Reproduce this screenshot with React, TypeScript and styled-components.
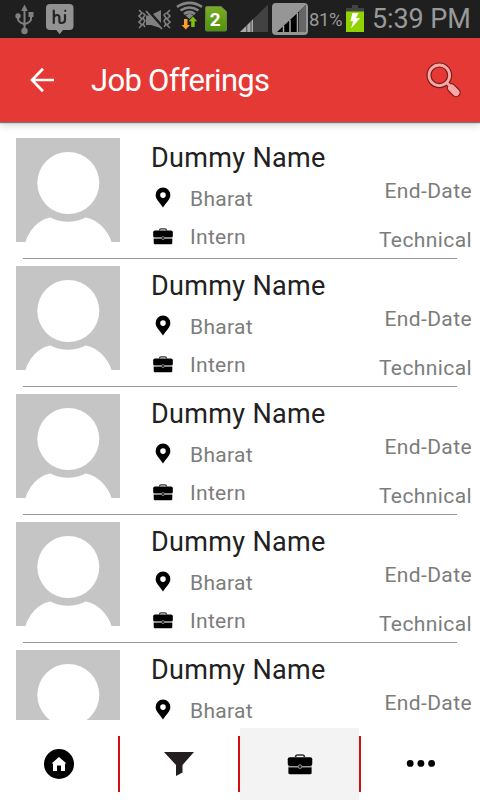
import React from "react";
import styled, { createGlobalStyle } from "styled-components";

const GlobalStyle = createGlobalStyle`
  * { box-sizing: border-box; }
  body { margin: 0; background: #fff; font-family: Roboto, "Liberation Sans", sans-serif; }
`;

const Screen = styled.div`
  width: 480px;
  height: 800px;
  display: flex;
  flex-direction: column;
  overflow: hidden;
  background: #fff;
`;

const StatusBar = styled.div`
  height: 38px;
  flex: none;
  display: flex;
  align-items: flex-start;
  background: #1f1f1f;
  color: #999;
`;

const StatusIcon = styled.svg<{ $gap: number }>`
  display: block;
  flex: none;
  margin-left: ${(p) => p.$gap}px;
`;

const BatteryLevel = styled.span`
  width: 36px;
  flex: none;
  padding-left: 1px;
  font-size: 18.5px;
  line-height: 38px;
  letter-spacing: -0.4px;
  margin-top: 1px;
  font-weight: 400;
  white-space: nowrap;
`;

const Clock = styled.span`
  margin-left: 8px;
  font-size: 27px;
  line-height: 38px;
  letter-spacing: -0.1px;
  white-space: nowrap;
`;

const Toolbar = styled.header`
  height: 84px;
  flex: none;
  display: flex;
  align-items: center;
  padding: 0 18px 0 29px;
  background: #e53935;
  color: #fff;
  position: relative;
  box-shadow: 0 1px 1px #777, 0 2px 8px rgba(0, 0, 0, 0.22);
`;

const Title = styled.h1`
  flex: 1;
  margin: 1px 0 0 36px;
  font-size: 31px;
  font-weight: 400;
  letter-spacing: -0.7px;
  white-space: nowrap;
`;

const JobList = styled.main`
  height: 598px;
  flex: none;
  overflow: hidden;
  padding-top: 8px;
`;

const JobRow = styled.article`
  height: 128px;
  display: flex;
  padding: 8px 8px 0 16px;
`;

const Divider = styled.div`
  height: 1px;
  margin: 0 23px -1px;
  background: #999;
`;

const Avatar = styled.svg`
  display: block;
  flex: none;
  background: #c5c5c5;
`;

const Details = styled.div`
  flex: 1;
  padding-left: 31px;
`;

const Name = styled.div`
  height: 42px;
  font-size: 27px;
  line-height: 41px;
  letter-spacing: 0.33px;
  color: #212121;
  white-space: nowrap;
`;

const Fact = styled.div`
  height: 38px;
  display: flex;
  align-items: center;
  font-size: 21px;
  font-weight: 400;
  letter-spacing: 0.3px;
  color: #7c7c7c;
  white-space: nowrap;
`;

const FactIcon = styled.svg`
  display: block;
  width: 24px;
  height: 24px;
  margin: 0 15px 2px 0;
`;

const Meta = styled.div`
  width: 100px;
  display: flex;
  flex-direction: column;
  align-items: flex-end;
  padding-top: 29px;
  font-size: 21px;
  font-weight: 400;
  line-height: 49px;
  letter-spacing: 0.4px;
  color: #7c7c7c;
  white-space: nowrap;
`;

const BottomBar = styled.nav`
  height: 72px;
  margin-top: 8px;
  flex: none;
  display: flex;
  align-items: center;
`;

const Tab = styled.button<{ $active?: boolean; $wide?: boolean }>`
  width: ${(p) => (p.$active || p.$wide ? 119 : 118)}px;
  flex: none;
  height: 72px;
  padding: 0;
  border: 0;
  display: flex;
  align-items: center;
  justify-content: center;
  background: ${(p) => (p.$active ? "#f3f3f3" : "#fff")};
`;

const Separator = styled.div`
  width: 2px;
  flex: none;
  height: 56px;
  background: #d50e0e;
`;

const BriefcaseShapes = () => (
  <>
    <path d="M8.400 6.500Q8.600 4.800 10 4.800h4q1.400 0 1.600 1.700" fill="none" stroke="#333" strokeWidth="1.3" />
    <rect x="2.200" y="6.600" width="19.600" height="7" rx="1.600" fill="#000" />
    <path d="M2.700 14.600h18.600v4.300q0 1.300-1.300 1.300H4q-1.300 0-1.300-1.300z" fill="#000" />
    <path d="M2.700 14.100h18.600" stroke="#999" strokeWidth="0.900" />
    <circle cx="12" cy="14.100" r="1.500" fill="#222" stroke="#999" strokeWidth="0.700" />
  </>
);

const StatusIcons = () => (
  <>
    <StatusIcon $gap={14} width="22" height="38" fill="none" stroke="#808080" strokeWidth="2">
      <path d="M10.500 30V10M4 16v3q0 3 6 5M17 15v4q0 3-6 5" />
      <path d="M10.500 4.500 13.800 11H7.200z" fill="#808080" stroke="none" />
      <circle cx="4" cy="16" r="2.700" fill="#808080" stroke="none" />
      <path d="M14.500 12h5v5h-5z" fill="#808080" stroke="none" />
      <circle cx="10.500" cy="31" r="3.200" fill="#808080" stroke="none" />
    </StatusIcon>
    <StatusIcon $gap={10} width="28" height="38">
      <path d="M4 4h19.500q4 0 4 4v18q0 4-4 4H17l-3.300 4.200L10.300 30H4q-4 0-4-4V8q0-4 4-4z" fill="#929292" />
      <g fill="none" stroke="#242424" strokeWidth="2.200" strokeLinecap="round" strokeLinejoin="round">
        <path d="M7.800 10.500V23M7.800 17.500q1-2.500 3.200-2.500 2.400 0 2.400 2.500V21q0 2 1.800 2 3.800 0 3.800-3v-5" />
        <path d="M19.200 10.800h.1" />
      </g>
    </StatusIcon>
    <StatusIcon $gap={64} width="34" height="38" fill="none" stroke="#808080">
      <path d="m1 10 3 3-3 3 3 3-3 3 3 3-3 3M5 13l2 2-2 3 2 3-2 3 2 3M32 10l-3 3 3 3-3 3 3 3-3 3 3 3M28 13l-2 2 2 3-2 3 2 3-2 3" strokeWidth="1.600" />
      <path d="M8 15.500h5l11 13L13 25H8zM15 14l8-4v13z" fill="#808080" stroke="none" />
      <path d="m9.500 10.500 17 18" stroke="#1f1f1f" strokeWidth="1.500" />
      <path d="m8 11 16 18" strokeWidth="1.800" />
    </StatusIcon>
    <StatusIcon $gap={4} width="28" height="38" fill="none">
      <g stroke="#858585" strokeWidth="2.700">
        <path d="M1 6.800q12.500-8 25 0M4.500 10.500q9-6 18 0M8 14q5.500-4 11 0" />
      </g>
      <path d="m9.500 15.500 4-2.200 4 2.200-4 3.500z" fill="#858585" />
      <path d="M8 19h3.500v6H14l-4.200 4.500L5.500 25H8z" fill="#ff9c32" />
      <path d="m17 16.500 4.200 4.700h-2.500V27h-3.500v-5.800h-2.500z" fill="#7ac20c" />
    </StatusIcon>
    <StatusIcon $gap={1} width="23" height="38">
      <defs>
        <linearGradient id="sim" x2="0" y2="1">
          <stop stopColor="#7cab28" />
          <stop offset="1" stopColor="#4f920b" />
        </linearGradient>
      </defs>
      <path d="M2 6.500h14l5.500 5V30q0 1-1 1H1.500q-1 0-1-1V8q0-1.500 1.500-1.500z" fill="url(#sim)" stroke="#658347" strokeWidth="1" />
      <text x="10.200" y="25.500" textAnchor="middle" fontFamily="Roboto" fontWeight="700" fontSize="19" fill="#fff">2</text>
    </StatusIcon>
    <StatusIcon $gap={12} width="28" height="38">
      <path d="M0 32 28 4.500V32z" fill="#424242" />
      <path d="M0 32 13 19.200V32z" fill="#aaa" />
      <path d="M6.800 24v8M11 20v12" stroke="#333" strokeWidth="0.800" />
    </StatusIcon>
    <StatusIcon $gap={4} width="36" height="38">
      <rect y="3" width="36" height="32" rx="4" fill="#969696" />
      <path d="M5 32 34 5v27z" fill="#000" />
      <path d="M27 11.500 34 5v27h-7z" fill="#666" />
      <path d="M11.500 26v6M18 20v12M25.500 13v19" stroke="#aaa" strokeWidth="1.500" />
    </StatusIcon>
  </>
);

const JobItem = () => (
  <>
    <JobRow>
      <Avatar width="104" height="104" viewBox="0 0 104 104">
        <path d="M9.500 104C13 92 22 82 34 79.500Q52 88 70 79.500C82 82 92 92 95.500 104z" fill="#fff" />
        <circle cx="52.300" cy="45" r="31" fill="#fff" />
      </Avatar>
      <Details>
        <Name>Dummy Name</Name>
        <Fact>
          <FactIcon viewBox="0 0 24 24">
            <path fillRule="evenodd" d="M12 1.600a7.400 7.400 0 0 0-7.400 7.400c0 4.400 4.200 7.500 7.400 12.600C15.200 16.500 19.400 13.400 19.400 9A7.400 7.400 0 0 0 12 1.600zm0 4.700a2.800 2.800 0 1 1 0 5.600 2.800 2.800 0 0 1 0-5.600z" />
          </FactIcon>
          Bharat
        </Fact>
        <Fact>
          <FactIcon viewBox="0 0 24 24"><BriefcaseShapes /></FactIcon>
          Intern
        </Fact>
      </Details>
      <Meta>
        <span>End-Date</span>
        <span>Technical</span>
      </Meta>
    </JobRow>
    <Divider />
  </>
);

export default function App() {
  return (
    <Screen>
      <GlobalStyle />
      <StatusBar>
        <StatusIcons />
        <BatteryLevel>81%</BatteryLevel>
        <StatusIcon $gap={2} width="18" height="38">
          <path d="M6 5h6v3h6v4H0V8h6z" fill="#434343" />
          <path d="M0 11.500h18V32H0z" fill="#91d300" />
          <path d="M6.500 13h6l-2.500 5h4.300L5 28.500l2.200-7.300H4.300z" fill="#fff" />
        </StatusIcon>
        <Clock>5:39 PM</Clock>
      </StatusBar>
      <Toolbar>
        <svg width="26" height="26" viewBox="0 0 26 26" fill="none" stroke="#fff" strokeWidth="2.700">
          <path d="M25 13H3M14 1.800 3 13l11 11.200" />
        </svg>
        <Title>Job Offerings</Title>
        <svg width="36" height="36" viewBox="0 0 36 36" fill="none">
          <g stroke="#7a1c1b">
            <path d="m20 20 4 4" strokeWidth="5" />
            <path d="m25.500 26 4.500 4.500" strokeWidth="9.500" strokeLinecap="round" />
            <circle cx="13.300" cy="13.300" r="10.300" strokeWidth="5.200" />
          </g>
          <g stroke="#f6a8a7">
            <path d="m20 20 5 5" strokeWidth="2.800" />
            <path d="m25.500 26 4.500 4.500" strokeWidth="7" strokeLinecap="round" />
            <circle cx="13.300" cy="13.300" r="10.300" strokeWidth="2.800" />
          </g>
        </svg>
      </Toolbar>
      <JobList>
        {[0, 1, 2, 3, 4].map((id) => <JobItem key={id} />)}
      </JobList>
      <BottomBar>
        <Tab aria-label="Home">
          <svg width="30" height="30" viewBox="0 0 30 30">
            <circle cx="15" cy="15" r="15" />
            <path d="m15 8 7.500 6.500H21V22h-4v-5.500h-4V22H9v-7.500H7.500z" fill="#fff" />
          </svg>
        </Tab>
        <Separator />
        <Tab aria-label="Filter">
          <svg width="30" height="24" viewBox="0 0 30 24">
            <path d="M0 0h30L18.500 13v7.500L12 24V13z" fill="#231f20" />
          </svg>
        </Tab>
        <Separator />
        <Tab $active aria-label="Jobs">
          <svg width="30" height="30" viewBox="0 0 24 24"><BriefcaseShapes /></svg>
        </Tab>
        <Separator />
        <Tab $wide aria-label="More">
          <svg width="30" height="8" viewBox="0 0 30 8">
            <circle cx="4.200" cy="3.400" r="3.400" />
            <circle cx="14.900" cy="3.400" r="3.400" />
            <circle cx="25.600" cy="3.400" r="3.400" />
          </svg>
        </Tab>
      </BottomBar>
    </Screen>
  );
}
